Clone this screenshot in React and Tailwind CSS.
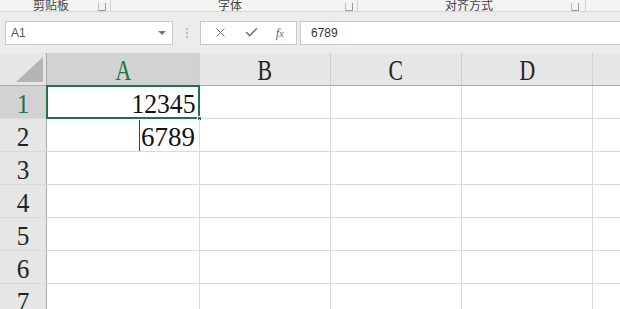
import { X, Check } from 'lucide-react';

const serif = { fontFamily: '"Liberation Serif", "Times New Roman", serif' };
const cols = ['A', 'B', 'C', 'D'];
const colW = ['w-[153px]', 'w-[131px]', 'w-[131px]', 'w-[131px]'];

function Launcher() {
  return (
    <span className="inline-block w-[8px] h-[8px] border border-[#9a9a9a] border-t-0 border-l-[#bdbdbd]" />
  );
}

function Ribbon() {
  return (
    <div className="h-[12px] overflow-hidden bg-[#f3f3f3] border-b border-[#d8d8d8] flex text-[12px] text-[#444]" style={{ fontFamily: '"Noto Sans CJK SC", sans-serif' }}>
      <div className="w-[111px] flex items-end justify-between pl-[33px] pr-[4px] border-r border-[#d0d0d0] -mt-[7px]">
        <span className="leading-[12px]">剪贴板</span>
        <Launcher />
      </div>
      <div className="w-[247px] flex items-end justify-between pl-[107px] pr-[4px] border-r border-[#d0d0d0] -mt-[7px]">
        <span className="leading-[12px]">字体</span>
        <Launcher />
      </div>
      <div className="w-[228px] flex items-end justify-between pl-[87px] pr-[6px] border-r border-[#d0d0d0] -mt-[7px]">
        <span className="leading-[12px]">对齐方式</span>
        <Launcher />
      </div>
    </div>
  );
}

function FormulaBar() {
  return (
    <div className="h-[41px] bg-[#ececec] flex items-center pl-[5px] text-[12px] text-[#333]" style={{ fontFamily: '"Liberation Sans", Arial, sans-serif' }}>
      <div className="w-[168px] h-[24px] bg-white border border-[#c8c8c8] flex items-center justify-between pl-[5px] pr-[6px]">
        <span className="text-[#555]">A1</span>
        <span className="w-0 h-0 border-l-[4px] border-r-[4px] border-t-[4px] border-l-transparent border-r-transparent border-t-[#777]" />
      </div>
      <div className="w-[27px] flex flex-col items-center gap-[2px]">
        <span className="w-[2px] h-[2px] bg-[#bbb]" />
        <span className="w-[2px] h-[2px] bg-[#bbb]" />
        <span className="w-[2px] h-[2px] bg-[#bbb]" />
      </div>
      <div className="w-[97px] h-[24px] bg-white border border-[#c8c8c8] flex items-center justify-around px-[4px] text-[#777]">
        <X size={15} strokeWidth={1.6} />
        <Check size={15} strokeWidth={2.6} />
        <span className="italic text-[13px] text-[#666]" style={serif}>f<span className="text-[10px]">x</span></span>
      </div>
      <div className="flex-1 h-[24px] ml-[3px] bg-white border border-[#c8c8c8] border-r-0 flex items-center pl-[10px]">
        6789
      </div>
    </div>
  );
}

function HeaderRow() {
  return (
    <div className="flex h-[33px] bg-[#e6e6e6] border-b border-[#ababab]">
      <div className="w-[47px] shrink-0 border-r border-[#ababab] relative">
        <svg className="absolute right-[3px] bottom-[3px]" width="27" height="25" viewBox="0 0 27 25">
          <polygon points="27,0 27,25 0,25" fill="#b4b4b4" />
        </svg>
      </div>
      {cols.map((c, i) => (
        <div
          key={c}
          className={`${colW[i]} shrink-0 flex items-center justify-center border-r border-[#d0d0d0] pt-[2px] ${i === 0 ? 'bg-[#d2d2d2] text-[#217346]' : 'text-[#222]'}`}
        >
          <span className="inline-block text-[29px] leading-none scale-x-75" style={serif}>{c}</span>
        </div>
      ))}
      <div className="flex-1" />
    </div>
  );
}

function Row({ n, children }) {
  const sel = n === 1;
  return (
    <div className="flex h-[33px] border-b border-[#dadada]">
      <div className={`w-[47px] shrink-0 flex items-center justify-center border-r pt-[3px] ${sel ? 'bg-[#d2d2d2] text-[#217346] border-[#217346]' : 'bg-[#e6e6e6] text-[#222] border-[#ababab]'}`}>
        <span className="inline-block text-[28px] leading-none scale-x-90" style={serif}>{n}</span>
      </div>
      <div className="w-[153px] shrink-0 border-r border-[#dadada] relative flex items-center justify-end pr-[4px]">
        {children}
      </div>
      <div className="w-[131px] shrink-0 border-r border-[#dadada]" />
      <div className="w-[131px] shrink-0 border-r border-[#dadada]" />
      <div className="w-[131px] shrink-0 border-r border-[#dadada]" />
      <div className="flex-1" />
    </div>
  );
}

export default function App() {
  return (
    <div className="w-[620px] h-[309px] overflow-hidden bg-white">
      <Ribbon />
      <FormulaBar />
      <HeaderRow />
      <Row n={1}>
        <div className="absolute -left-[1px] -top-[1px] -right-[1px] -bottom-[1px] border-2 border-[#217346] pointer-events-none" />
        <div className="absolute -right-[3px] -bottom-[3px] w-[5px] h-[5px] bg-[#217346] border border-white" />
        <span className="inline-block text-[27px] leading-none text-[#111] pt-[5px] scale-x-95 origin-right" style={serif}>12345</span>
      </Row>
      <Row n={2}>
        <span className="w-[1px] h-[31px] bg-[#444] mr-[1px]" />
        <span className="inline-block text-[27px] leading-none text-[#111] pt-[5px]" style={serif}>6789</span>
      </Row>
      {[3, 4, 5, 6, 7].map((n) => (
        <Row key={n} n={n} />
      ))}
    </div>
  );
}
